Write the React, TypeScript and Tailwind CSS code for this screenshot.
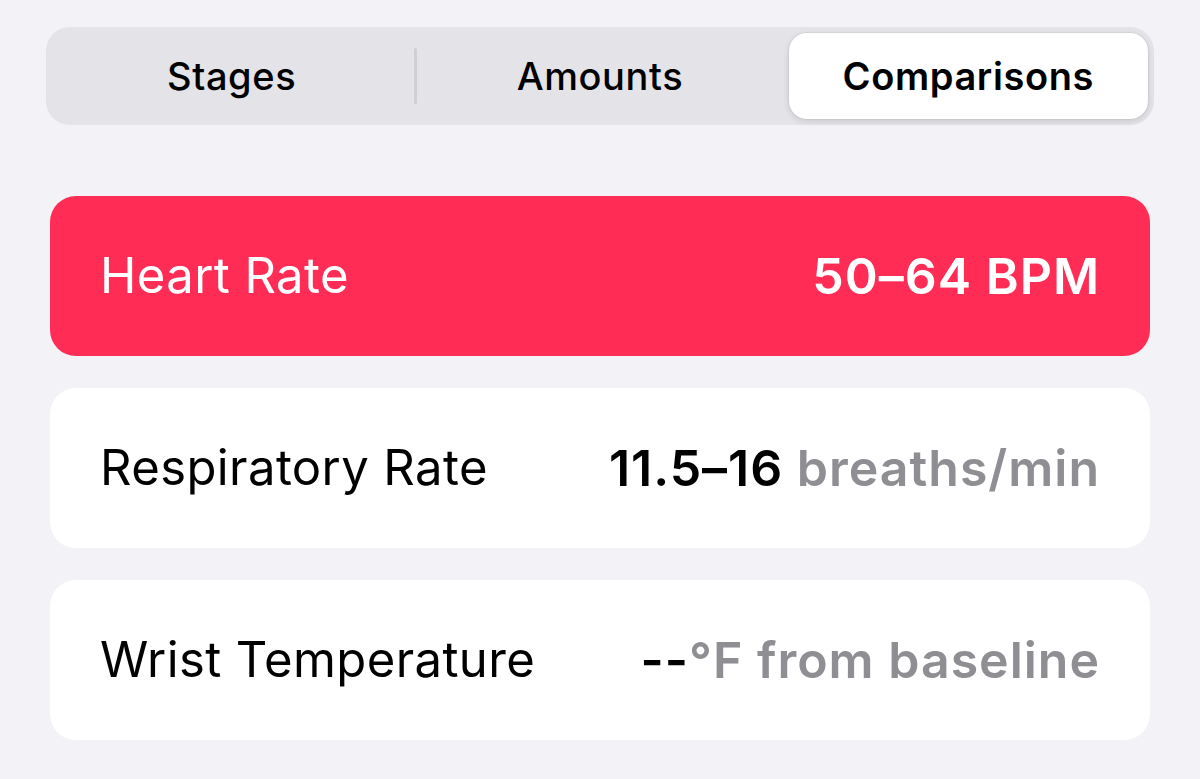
import React from "react";

const tabs = ["Stages", "Amounts", "Comparisons"];

function Segmented({ active }: { active: number }) {
  return (
    <div className="flex h-[98px] items-center rounded-[24px] bg-[#e3e3e8] p-[6px]">
      {tabs.map((t, i) => (
        <React.Fragment key={t}>
          {i > 0 && (
            <div
              className={
                i === 1 && active !== 0 && active !== 1
                  ? "mx-[3px] h-[56px] w-[3px] rounded-full bg-[#cfcfd4]"
                  : "mx-[3px] h-[56px] w-[3px] bg-transparent"
              }
            />
          )}
          <div
            className={
              i === active
                ? "flex h-full flex-1 items-center justify-center rounded-[18px] bg-white text-[38px] font-semibold tracking-[0.6px] text-black shadow-[0_2px_6px_rgba(0,0,0,0.12),0_0_0_1px_rgba(0,0,0,0.04)]"
                : "flex h-full flex-1 items-center justify-center text-[38px] font-medium tracking-[0.6px] text-black"
            }
          >
            {t}
          </div>
        </React.Fragment>
      ))}
    </div>
  );
}

function Row({
  label,
  value,
  unit,
  tone,
}: {
  label: string;
  value: string;
  unit?: string;
  tone: "red" | "white";
}) {
  const red = tone === "red";
  return (
    <div
      className={
        red
          ? "flex h-[160px] items-center justify-between rounded-[26px] bg-[#ff2d55] px-[50px] text-white"
          : "flex h-[160px] items-center justify-between rounded-[26px] bg-white px-[50px] text-black"
      }
    >
      <span className="text-[49px] font-normal tracking-[0.4px]">{label}</span>
      <span className="text-[50px] font-semibold tracking-[1px]">
        {value}
        {unit && <span className="text-[#8e8e93]">{unit}</span>}
      </span>
    </div>
  );
}

export default function App() {
  return (
    <div
      className="min-h-[779px] w-full bg-[#f2f2f7] px-[46px] pt-[27px]"
      style={{ fontFamily: "Inter, 'Noto Sans', sans-serif" }}
    >
      <Segmented active={2} />
      <div className="mx-[4px] mt-[71px] flex flex-col gap-[32px]">
        <Row label="Heart Rate" value="50–64 BPM" tone="red" />
        <Row label="Respiratory Rate" value="11.5–16 " unit="breaths/min" tone="white" />
        <Row label="Wrist Temperature" value="--" unit="°F from baseline" tone="white" />
      </div>
    </div>
  );
}
